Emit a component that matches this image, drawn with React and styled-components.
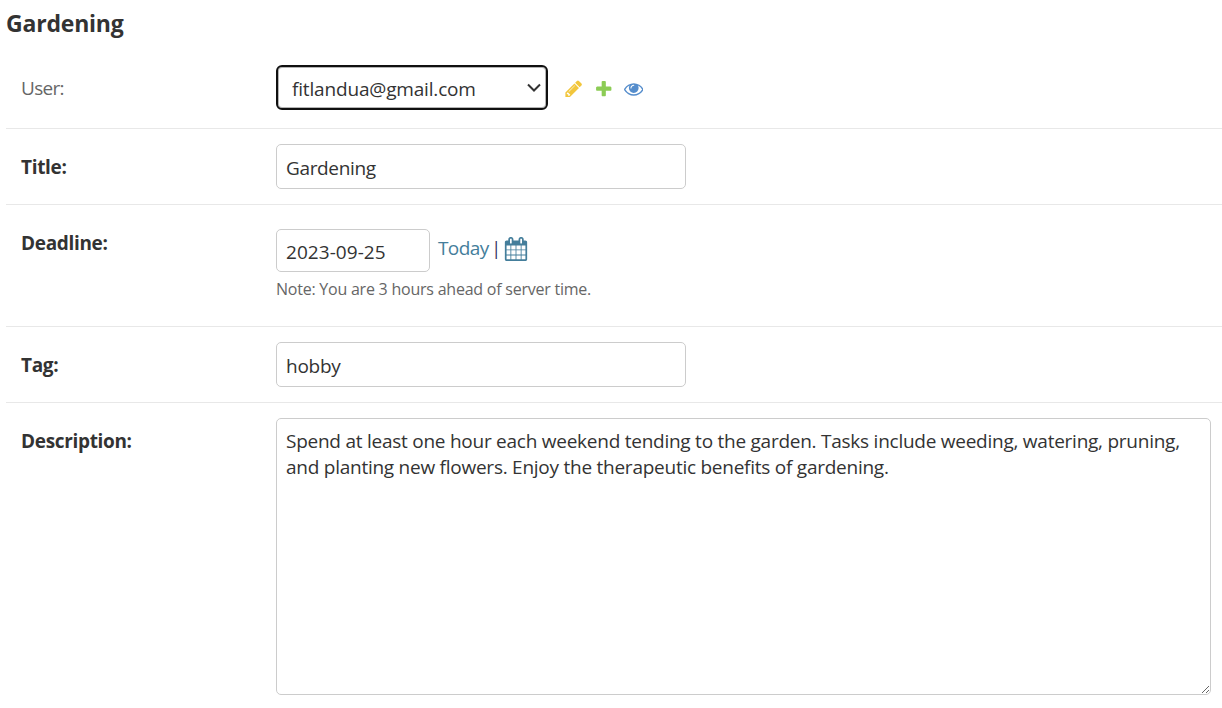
import React from "react";
import styled, { createGlobalStyle, css } from "styled-components";

const GlobalStyle = createGlobalStyle`
  * { box-sizing: border-box; }
  html, body { margin: 0; background: #fff; overflow: hidden; }
  body {
    color: #333;
    font-family: "Open Sans", "Noto Sans", sans-serif;
    font-size: 19px;
    font-kerning: normal;
  }
`;

const Form = styled.form`
  width: 1222px;
  height: 708px;
  padding-left: 6px;
  overflow: hidden;
`;

const Heading = styled.h1`
  margin: 0;
  padding-top: 7px;
  height: 50px;
  font-size: 23px;
  line-height: 33px;
  font-weight: 700;
  letter-spacing: -0.2px;
`;

const Row = styled.div`
  display: flex;
  align-items: flex-start;
  height: ${(p) => p.$height}px;
  padding: ${(p) => p.$top ?? 15}px 11px 0 15px;
  border-bottom: ${(p) => (p.$last ? "0" : "1px solid #e8e8e8")};
`;

const Label = styled.label`
  flex: 0 0 255px;
  padding-top: ${(p) => p.$offset ?? 9}px;
  line-height: 28px;
  font-weight: ${(p) => (p.$optional ? 400 : 700)};
  letter-spacing: ${(p) => p.$tracking ?? -0.33}px;
  color: ${(p) => (p.$optional ? "#666" : "#333")};
`;

const control = css`
  display: block;
  margin: 0;
  border: 1px solid #ccc;
  border-radius: 5px;
  outline: none;
  background: #fff;
  color: #333;
  font: inherit;
`;

const TextInput = styled.input`
  ${control}
  width: ${(p) => p.$width ?? 410}px;
  height: ${(p) => p.$height ?? 45}px;
  padding: 3px 9px 0;
  letter-spacing: ${(p) => p.$tracking ?? -0.35}px;
`;

const TextArea = styled.textarea`
  ${control}
  width: 935px;
  height: 277px;
  padding: 9px 9px;
  line-height: 26px;
  letter-spacing: -0.25px;
  resize: both;
`;

const SelectFrame = styled.div`
  display: grid;
  align-items: center;
  width: 272px;
  height: 45px;
`;

const Select = styled.select`
  ${control}
  grid-area: 1 / 1;
  width: 272px;
  height: 45px;
  padding: 2px 30px 0 14px;
  appearance: none;
  border: 2px solid #101010;
  border-radius: 6px;
  box-shadow: inset 0 0 0 1px #b4b4b4;
  letter-spacing: -0.17px;
`;

const Chevron = styled.svg`
  grid-area: 1 / 1;
  justify-self: end;
  margin-right: 7px;
  width: 14px;
  height: 10px;
  pointer-events: none;
`;

const RelatedLinks = styled.div`
  display: flex;
  gap: 10.5px;
  padding: 14px 0 0 15.5px;
`;

const Icon = styled.svg`
  display: block;
  width: ${(p) => p.$size ?? 19.5}px;
  height: ${(p) => p.$size ?? 19.5}px;
  fill: ${(p) => p.$color};
`;

const DateField = styled.div`
  display: flex;
  flex-direction: column;
`;

const DateLine = styled.div`
  display: flex;
  align-items: flex-start;
`;

const Shortcuts = styled.div`
  display: flex;
  align-items: flex-start;
  padding: 5px 0 0 8px;
  line-height: 28px;
`;

const Today = styled.a`
  color: #447e9b;
  letter-spacing: -0.6px;
`;

const Divider = styled.span`
  margin: 0 6px 0 6px;
  width: 3px;
  color: #302a60;
  font-size: 18px;
  display: flex;
  justify-content: center;
`;

const CalendarLink = styled.a`
  padding-top: 3px;
`;

const Help = styled.div`
  padding-top: 5px;
  line-height: 24px;
  font-size: 16px;
  letter-spacing: -0.23px;
  color: #666;
`;

const paths = {
  pencil:
    "M491 1536l91-91-235-235-91 91v107h128v128h107zm523-928q0-22-22-22-10 0-17 7l-542 542q-7 7-7 17 0 22 22 22 10 0 17-7l542-542q7-7 7-17zm-54-192l416 416-832 832h-416v-416zm683 96q0 53-37 90l-166 166-416-416 166-165q36-38 90-38 53 0 91 38l235 234q37 39 37 91z",
  plus: "M1600 796v192q0 40-28 68t-68 28h-416v416q0 40-28 68t-68 28h-192q-40 0-68-28t-28-68v-416h-416q-40 0-68-28t-28-68v-192q0-40 28-68t68-28h416v-416q0-40 28-68t68-28h192q40 0 68 28t28 68v416h416q40 0 68 28t28 68z",
  eye: "M1664 960q-152-236-381-353 61 104 61 225 0 185-131.5 316.5t-316.5 131.5-316.5-131.5-131.5-316.5q0-121 61-225-229 117-381 353 133 205 333.5 326.5t434.5 121.5 434.5-121.5 333.5-326.5zm-720-384q0-20-14-34t-34-14q-125 0-214.5 89.5t-89.5 214.5q0 20 14 34t34 14 34-14 14-34q0-86 61-147t147-61q20 0 34-14t14-34zm848 384q0 34-20 69-140 230-376.5 368.5t-499.5 138.5-499.5-139-376.5-368q-20-35-20-69t20-69q140-229 376.5-368t499.5-139 499.5 139 376.5 368q20 35 20 69z",
  calendar:
    "M192 1664h288v-288h-288v288zm352 0h320v-288h-320v288zm-352-352h288v-320h-288v320zm352 0h320v-320h-320v320zm-352-384h288v-288h-288v288zm736 736h320v-288h-320v288zm-384-736h320v-288h-320v288zm768 736h288v-288h-288v288zm-384-352h320v-320h-320v320zm-352-864v-288q0-13-9.5-22.5t-22.5-9.5h-64q-13 0-22.5 9.5t-9.5 22.5v288q0 13 9.5 22.5t22.5 9.5h64q13 0 22.5-9.5t9.5-22.5zm736 864h288v-320h-288v320zm-384-384h320v-288h-320v288zm384 0h288v-288h-288v288zm32-480v-288q0-13-9.5-22.5t-22.5-9.5h-64q-13 0-22.5 9.5t-9.5 22.5v288q0 13 9.5 22.5t22.5 9.5h64q13 0 22.5-9.5t9.5-22.5zm384-64v1280q0 52-38 90t-90 38h-1408q-52 0-90-38t-38-90v-1280q0-52 38-90t90-38h128v-96q0-66 47-113t113-47h64q66 0 113 47t47 113v96h384v-96q0-66 47-113t113-47h64q66 0 113 47t47 113v96h128q52 0 90 38t38 90z",
};

function Glyph({ name, color, size }) {
  return (
    <Icon viewBox="0 0 1792 1792" $color={color} $size={size} aria-hidden="true">
      <path d={paths[name]} />
    </Icon>
  );
}

export default function App() {
  return (
    <>
      <GlobalStyle />
      <Form>
        <Heading>Gardening</Heading>
        <Row $height={79}>
          <Label $optional $tracking={-0.7} htmlFor="user">User:</Label>
          <SelectFrame>
            <Select id="user" defaultValue="fitlandua@gmail.com">
              <option>fitlandua@gmail.com</option>
            </Select>
            <Chevron viewBox="0 0 14 10">
              <path d="M1 1.5l6 6 6-6" fill="none" stroke="#333" strokeWidth="2" />
            </Chevron>
          </SelectFrame>
          <RelatedLinks>
            <Glyph name="pencil" color="#f2c63c" />
            <Glyph name="plus" color="#8ccc55" />
            <Glyph name="eye" color="#558dcc" />
          </RelatedLinks>
        </Row>
        <Row $height={76}>
          <Label htmlFor="title">Title:</Label>
          <TextInput id="title" defaultValue="Gardening" />
        </Row>
        <Row $height={122} $top={24}>
          <Label $offset={0} htmlFor="deadline">Deadline:</Label>
          <DateField>
            <DateLine>
              <TextInput
                id="deadline"
                $width={154}
                $height={43}
                $tracking={0.05}
                defaultValue="2023-09-25"
              />
              <Shortcuts>
                <Today>Today</Today>
                <Divider>|</Divider>
                <CalendarLink>
                  <Glyph name="calendar" color="#447e9b" size={24} />
                </CalendarLink>
              </Shortcuts>
            </DateLine>
            <Help>Note: You are 3 hours ahead of server time.</Help>
          </DateField>
        </Row>
        <Row $height={76}>
          <Label htmlFor="tag">Tag:</Label>
          <TextInput id="tag" $tracking={-0.25} defaultValue="hobby" />
        </Row>
        <Row $height={305} $last>
          <Label htmlFor="description">Description:</Label>
          <TextArea
            id="description"
            spellCheck={false}
            defaultValue="Spend at least one hour each weekend tending to the garden. Tasks include weeding, watering, pruning, and planting new flowers. Enjoy the therapeutic benefits of gardening."
          />
        </Row>
      </Form>
    </>
  );
}
